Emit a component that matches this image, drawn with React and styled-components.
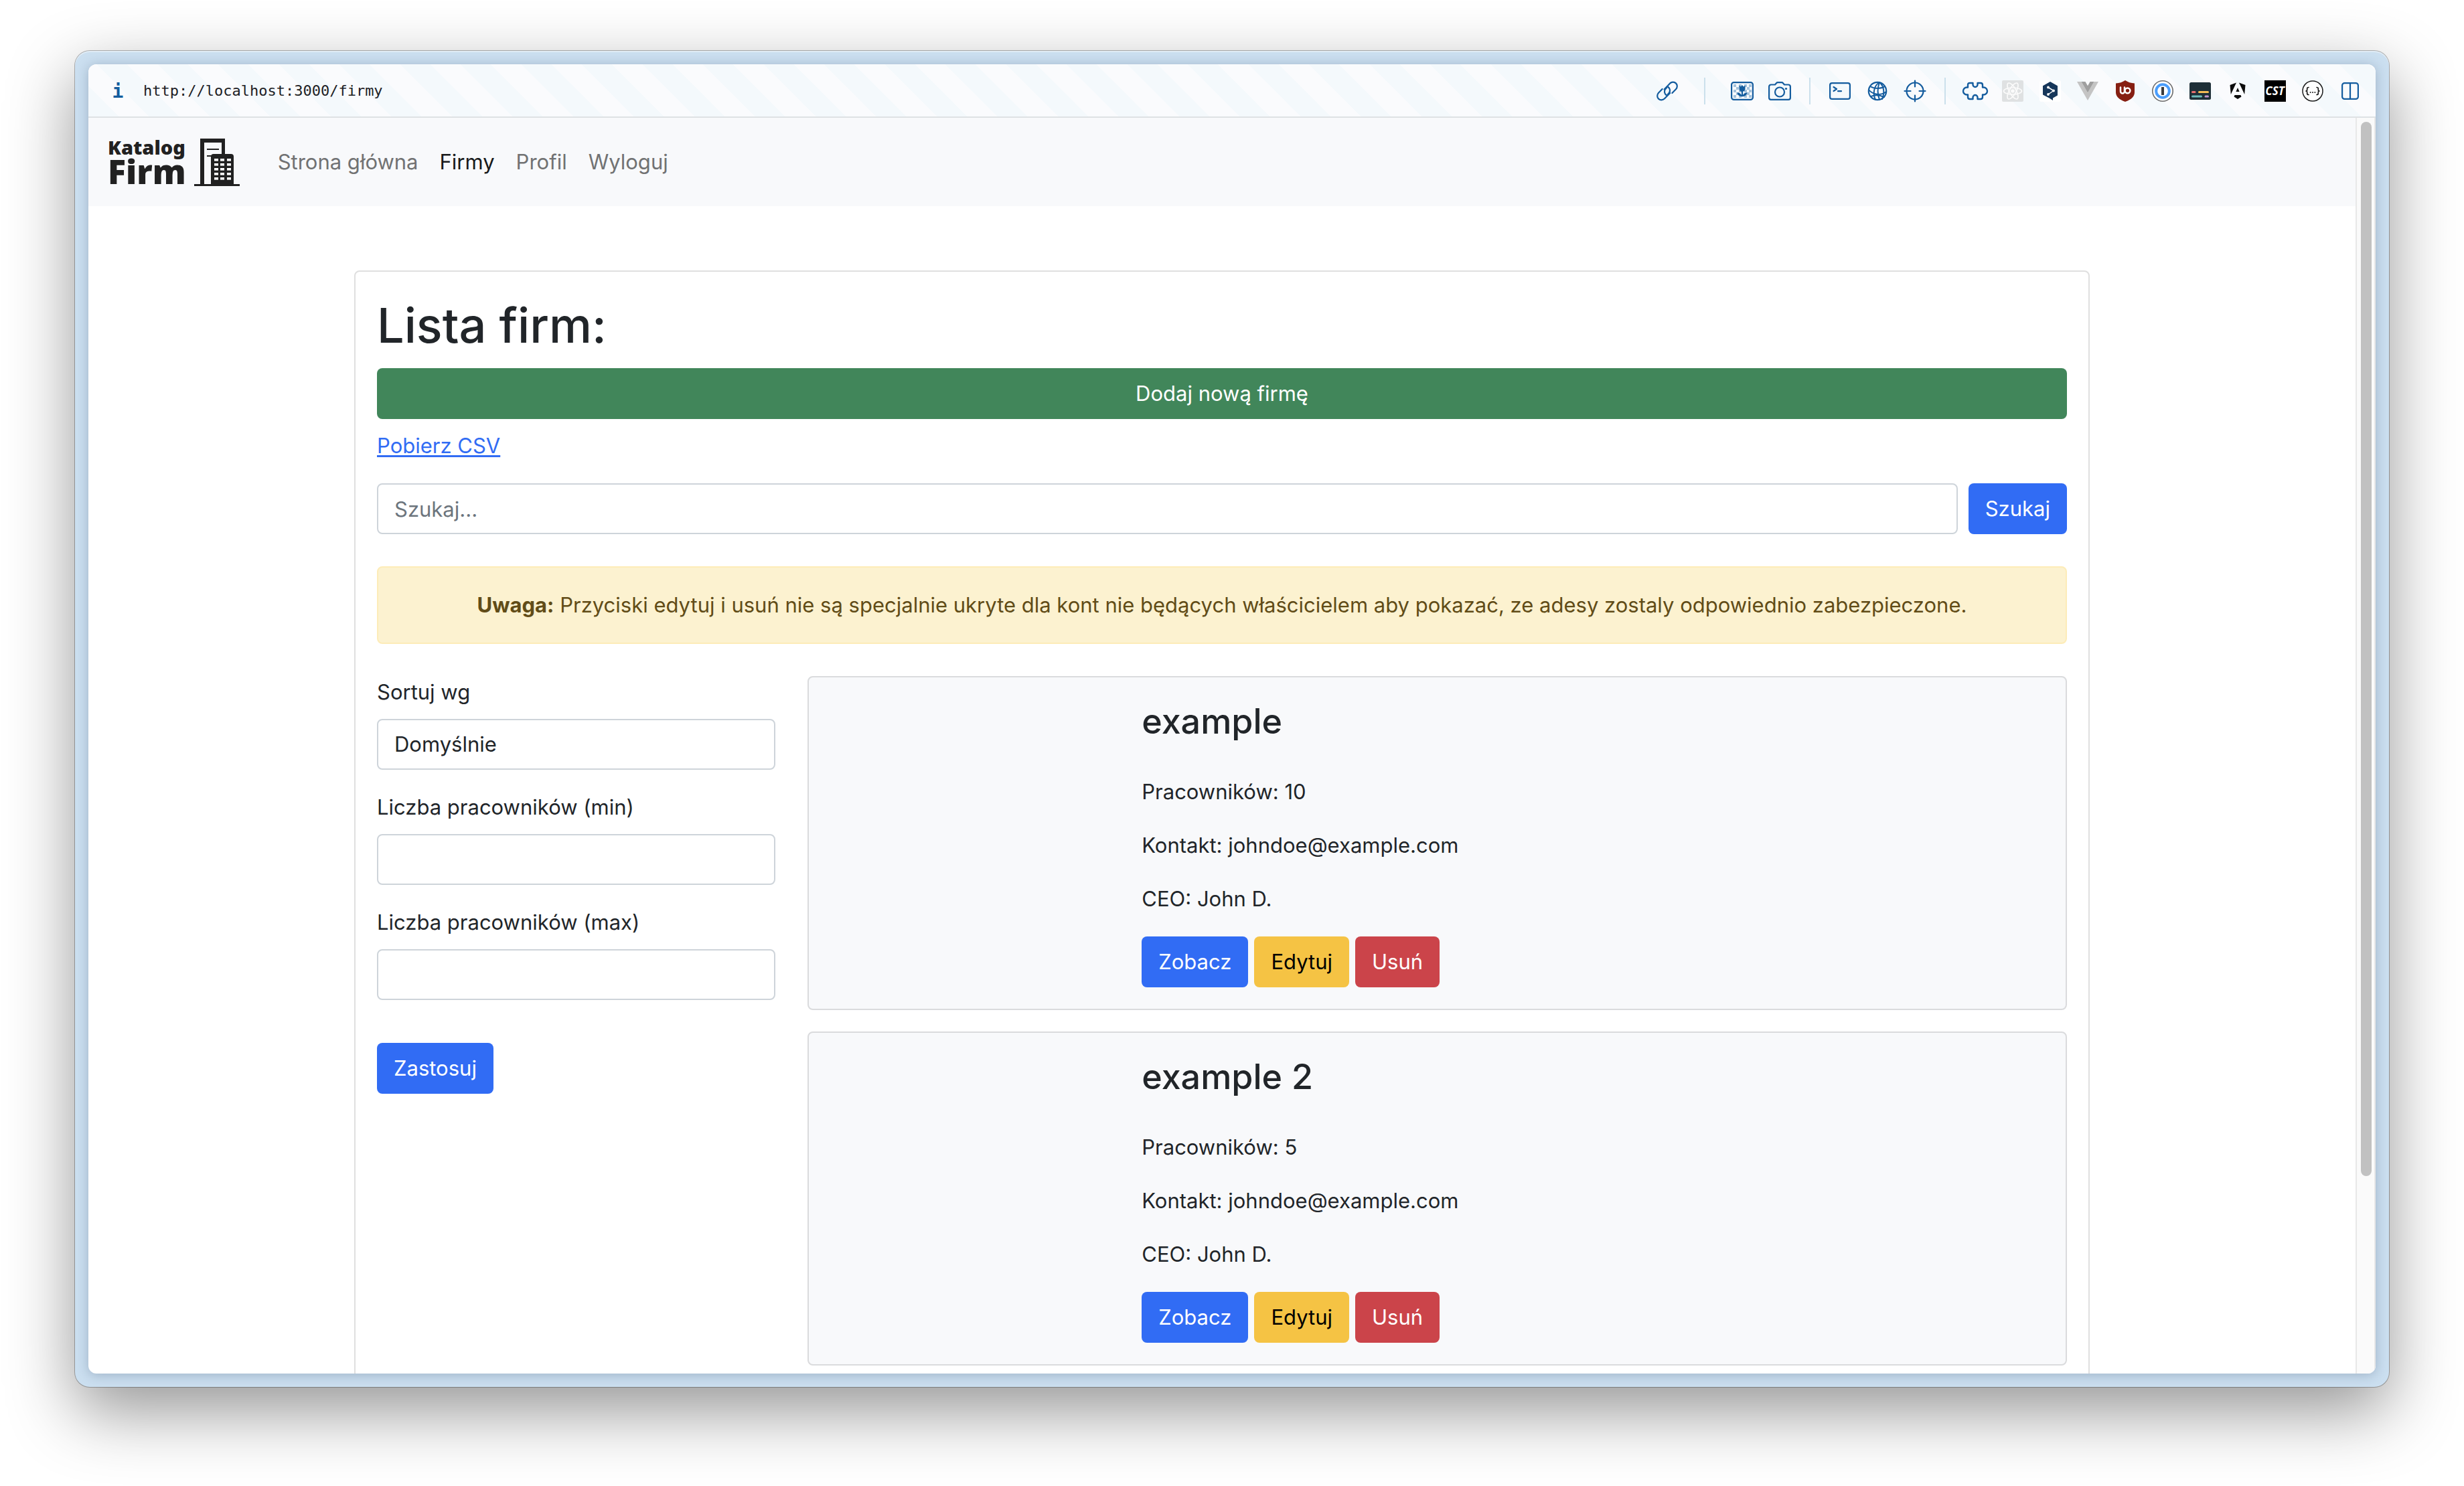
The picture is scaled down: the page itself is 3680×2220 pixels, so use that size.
import React from "react";
import styled, { createGlobalStyle } from "styled-components";

const GlobalStyle = createGlobalStyle`
  *, *::before, *::after { box-sizing: border-box; }
  body {
    margin: 0;
    background: #fff;
    color: #212529;
    font-family: Inter, "Liberation Sans", sans-serif;
    font-size: 31px;
    line-height: 48px;
  }
  h1, h2, p { margin: 0; }
`;

/* ---------- window ---------- */

const Desktop = styled.div`
  display: flex;
  height: 100vh;
  padding: 76px 112px 148px;
  overflow: hidden;
`;

const Frame = styled.div`
  flex: 1;
  min-width: 0;
  display: flex;
  padding: 20px;
  border-radius: 22px;
  background: #cbdff0;
  box-shadow:
    inset 0 2px 0 rgba(255, 255, 255, 0.4),
    0 0 0 1px rgba(0, 0, 0, 0.28),
    0 36px 100px rgba(0, 0, 0, 0.42);
`;

const Browser = styled.div`
  flex: 1;
  min-width: 0;
  display: flex;
  flex-direction: column;
  border-radius: 12px;
  overflow: hidden;
  background: #fff;
  box-shadow: 0 2px 18px rgba(20, 40, 70, 0.25);
`;

const Toolbar = styled.div`
  display: flex;
  align-items: center;
  height: 80px;
  padding: 2px 18px 0 24px;
  border-bottom: 2px solid #dee2e4;
  background: repeating-linear-gradient(45deg, #f4f9fc 0 32px, #fafbfd 32px 64px);
`;

const ToolButton = styled.button`
  display: flex;
  align-items: center;
  justify-content: center;
  width: 40px;
  height: 40px;
  padding: 0;
  border: 0;
  background: none;
  color: #145c9e;

  svg { display: block; overflow: visible; }
`;

const InfoMark = styled.span`
  font: bold 28px "DejaVu Sans Mono", monospace;
`;

const Address = styled.input`
  flex: 1;
  min-width: 0;
  height: 40px;
  margin: 0 18px;
  padding: 0;
  border: 0;
  outline: 0;
  background: none;
  color: #1d2125;
  font: 22px/40px "DejaVu Sans Mono", monospace;
`;

const ToolGroup = styled.div`
  display: flex;
  gap: 16px;
`;

const Separator = styled.span`
  width: 2px;
  height: 40px;
  margin: 0 ${(p) => (p.$wide ? 35 : 24)}px;
  background: #cbe0ec;
`;

const Viewport = styled.div`
  flex: 1;
  min-height: 0;
  display: flex;
`;

const Page = styled.div`
  flex: 1;
  min-width: 0;
  overflow: hidden;
`;

const ScrollTrack = styled.div`
  width: 30px;
  padding: 6px;
  border: solid #e8e8e8;
  border-width: 0 2px;
  background: #fafafa;
`;

const ScrollThumb = styled.div`
  width: 16px;
  height: 84.5%;
  border-radius: 8px;
  background: #c1c1c1;
`;

/* ---------- page ---------- */

const Navbar = styled.nav`
  display: flex;
  align-items: center;
  gap: 57px;
  height: 132px;
  padding: 0 29px;
  background: #f8f9fb;
`;

const Brand = styled.a`
  display: flex;
  align-items: center;
  gap: 12px;
  color: #212121;
  text-decoration: none;
  font-family: "Noto Sans", sans-serif;
  font-weight: 900;
`;

const BrandName = styled.span`
  display: flex;
  flex-direction: column;
`;

const BrandSmall = styled.span`
  font-size: 29px;
  line-height: 28px;
`;

const BrandLarge = styled.span`
  font-size: 50px;
  line-height: 44px;
`;

const NavLinks = styled.div`
  display: flex;
  gap: 32px;
`;

const NavLink = styled.a`
  color: ${(p) => (p.$active ? "#18191a" : "#717273")};
  text-decoration: none;
`;

const Panel = styled.main`
  max-width: 2592px;
  margin: 96px auto;
  padding: 32px;
  border: 2px solid #dfdfdf;
  border-radius: 8px;
  background: #fff;
`;

const Title = styled.h1`
  margin-bottom: 16px;
  font-size: 72px;
  font-weight: 500;
  line-height: 96px;
`;

const tones = {
  primary: ["#316cf4", "#fff"],
  success: ["#41865a", "#fff"],
  warning: ["#f5c344", "#000"],
  danger: ["#cb444a", "#fff"],
};

const Button = styled.button`
  display: ${(p) => (p.$block ? "block" : "inline-block")};
  width: ${(p) => (p.$block ? "100%" : "auto")};
  padding: 14px ${(p) => (p.$block ? 26 : 25)}px;
  border: 0;
  border-radius: 8px;
  background: ${(p) => tones[p.$tone][0]};
  color: ${(p) => tones[p.$tone][1]};
  font: inherit;
  line-height: 48px;
`;

const CsvRow = styled.p`
  margin: 16px 0 32px;
`;

const CsvLink = styled.a`
  color: #316cf4;
  text-decoration-thickness: 3px;
  text-underline-offset: 3px;
`;

const SearchForm = styled.form`
  display: flex;
  gap: 16px;
`;

const Field = styled.input`
  display: block;
  width: 100%;
  min-width: 0;
  height: 76px;
  margin: 0;
  padding: 12px 24px;
  border: 2px solid #ced4da;
  border-radius: 8px;
  background: #fff;
  color: #212529;
  font: inherit;
  appearance: none;

  &::placeholder { color: #6c757d; opacity: 1; }
`;

const Notice = styled.div`
  margin: 48px 0;
  padding: 32px;
  border: 2px solid #fdecb8;
  border-radius: 8px;
  background: #fcf2d0;
  color: #614c17;
  text-align: center;
`;

const Columns = styled.div`
  display: grid;
  grid-template-columns: repeat(12, 1fr);
  column-gap: 48px;
`;

const Filters = styled.form`
  grid-column: span 3;
  display: flex;
  flex-direction: column;
  align-items: flex-start;
  gap: 32px;
`;

const FilterRow = styled.div`
  width: 100%;
`;

const FilterLabel = styled.label`
  display: block;
  margin-bottom: 16px;
`;

const FilterActions = styled.div`
  margin-top: 32px;
`;

const Results = styled.div`
  grid-column: span 9;
  display: flex;
  flex-direction: column;
  gap: 32px;
`;

const CompanyCard = styled.article`
  padding: 32px;
  border: 2px solid #dadbdd;
  border-radius: 8px;
  background: #f8f9fb;
`;

const CompanyBody = styled.div`
  grid-column: 4 / -1;
`;

const CompanyName = styled.h2`
  margin-bottom: 48px;
  font-size: 52px;
  font-weight: 500;
  line-height: 67px;
`;

const Detail = styled.p`
  margin-bottom: 32px;
`;

const Actions = styled.div`
  display: flex;
  gap: 9px;
`;

/* ---------- drawings ---------- */

const BuildingLogo = () => (
  <svg width="68" height="72" viewBox="0 0 68 72" fill="#212121" aria-hidden="true">
    <path d="M9 1h37v24h-5V7H15v62H9z" />
    <path d="M19 16h18v2H19zM19 26h8v2h-8z" />
    <path d="M29 24h26a4 4 0 0 1 4 4v42H25V28a4 4 0 0 1 4-4z" />
    <path d="M0 69h68v3H0z" />
    {[31, 38, 45, 52, 59].map((y) =>
      [30, 39, 49].map((x) => <rect key={`${x}-${y}`} x={x} y={y} width="6" height="3.6" fill="#fff" />)
    )}
  </svg>
);

const Svg = ({ w = 32, h = 32, stroke, children }) => (
  <svg
    width={w}
    height={h}
    viewBox={`0 0 ${w} ${h}`}
    fill="none"
    stroke={stroke ? "currentColor" : "none"}
    strokeWidth="2.2"
    strokeLinecap="round"
    strokeLinejoin="round"
    aria-hidden="true"
  >
    {children}
  </svg>
);

const LinkIcon = () => (
  <Svg stroke>
    <path d="M11.6 13.4 L20.2 4.4 A6.2 6.2 0 0 1 29 13.2 L23.4 19" />
    <path d="M20.2 19 L11.8 27.6 A6.2 6.2 0 0 1 3 18.8 L8.6 13" />
    <path d="M14.6 22 a6.2 6.2 0 0 1 -1.4 -8.8 l2.4 -2.6" />
    <path d="M17.4 10 a6.2 6.2 0 0 1 1.4 8.8 l-2.4 2.6" />
  </Svg>
);

const PictureIcon = () => (
  <Svg w={34} h={28} stroke>
    <rect x="1.1" y="1.1" width="31.8" height="25.8" rx="3.5" />
    <g fill="#a6c3dc" stroke="none">
      {[4, 12, 20].map((y) =>
        [4, 12, 20, 27].map((x) => <rect key={`${x}-${y}`} x={x} y={y} width="4" height="4" />)
      )}
      {[8, 16].map((y) => [8, 24].map((x) => <rect key={`${x}-${y}`} x={x} y={y} width="4" height="4" />))}
    </g>
    <path
      d="M12.5 5.5l2.5 2 2-2.5 2 2.5 2.5-2v5a4.5 4.5 0 0 1-3.4 4.2V20c1-2.4 3.4-3.8 6.4-3.8-.4 3.6-3.2 6-7.5 6s-7.1-2.4-7.5-6c3 0 5.4 1.4 6.4 3.8v-5.3a4.5 4.5 0 0 1-3.4-4.2z"
      fill="currentColor"
      stroke="none"
    />
  </Svg>
);

const CameraIcon = () => (
  <Svg w={34} h={28} stroke>
    <path d="M4 4.5h6l2.2-2.5q.7-.9 1.8-.9h6q1.1 0 1.8.9L24 4.5h6a2.9 2.9 0 0 1 2.9 2.9V24a2.9 2.9 0 0 1-2.9 2.9H4A2.9 2.9 0 0 1 1.1 24V7.4A2.9 2.9 0 0 1 4 4.5z" />
    <circle cx="17" cy="15.5" r="7" />
    <circle cx="26.5" cy="10.5" r="1.6" fill="currentColor" stroke="none" />
  </Svg>
);

const TerminalIcon = () => (
  <Svg w={32} h={26} stroke>
    <rect x="1.1" y="1.1" width="29.8" height="23.8" rx="3" />
    <path d="M6.5 7l4.5 3-4.5 3M13 13.2h5" />
  </Svg>
);

const GlobeIcon = () => (
  <Svg w={30} h={30} stroke>
    <circle cx="15" cy="15" r="13.2" />
    <path d="M18 2C9 7 8 20 12 28M18 2c-3 8-3 18 0 26M18 2c7 6 8 16 4 25" strokeWidth="2" />
    <path d="M4 8c7 4 16 4 22 0M2 13c6 8 19 9 26 3M5 23c7-3 14-2 20 1" strokeWidth="2" />
  </Svg>
);

const TargetIcon = () => (
  <Svg w={34} h={34} stroke>
    <circle cx="17" cy="17" r="12.5" />
    <path d="M17 1.500v9M17 23.500v9M1.500 17h9M23.500 17h9" />
  </Svg>
);

const PuzzleIcon = () => (
  <svg width="38" height="28" viewBox="0 0 38 28" fill="none" stroke="#145c9e" strokeWidth="2.4" strokeLinejoin="round" aria-hidden="true">
    <path d="M11 2h4.500v2.500a3.500 3.500 0 0 0 7 0V2H27q3 0 3 3v3.500h1.500a5.500 5.500 0 0 1 0 11H30V23q0 3-3 3h-4.500v-2.500a3.500 3.500 0 0 0-7 0V26H11q-3 0-3-3v-3.500H6.500a5.500 5.500 0 0 1 0-11H8V5q0-3 3-3z" />
  </svg>
);

const ReactIcon = () => (
  <Svg>
    <rect width="32" height="32" rx="2" fill="#dfe1e2" />
    <g stroke="#fbfbfb" strokeWidth="1.7">
      {[0, 60, 120].map((r) => (
        <ellipse key={r} cx="16" cy="16" rx="13.5" ry="5" transform={`rotate(${r} 16 16)`} />
      ))}
    </g>
    <circle cx="16" cy="16" r="2.8" fill="#fbfbfb" />
  </Svg>
);

const DeeplIcon = () => (
  <Svg>
    <rect width="32" height="32" rx="3" fill="#fff" />
    <path d="M16 2l11 6.300V22.500l-7 4V30l-5-3.200L5 21.500V8.300z" fill="#17375a" />
    <path d="M13 10.500l8 5-8 5.500" stroke="#fff" strokeWidth="1.5" />
    <g fill="#fff">
      <circle cx="13" cy="10.5" r="1.9" />
      <circle cx="21" cy="15.5" r="1.9" />
      <circle cx="13" cy="21" r="1.9" />
    </g>
  </Svg>
);

const VueIcon = () => (
  <Svg>
    <path d="M0 2h6.500L16 18.500 25.500 2H32L16 30z" fill="#c4c4c4" />
    <path d="M6.500 2h6L16 8.200 19.500 2h6L16 18.500z" fill="#9f9f9f" />
  </Svg>
);

const ShieldIcon = () => (
  <Svg>
    <path d="M16 0q6 4 14 4.500V18q0 9-14 14Q2 27 2 18V4.500Q10 4 16 0z" fill="#861f12" />
    <path d="M9 10.500v6a3 3 0 0 0 6 0v-6" stroke="#fff" strokeWidth="2.5" />
    <circle cx="19.5" cy="15.3" r="3.9" stroke="#fff" strokeWidth="2.5" />
  </Svg>
);

const PasswordIcon = () => (
  <Svg>
    <circle cx="16" cy="16" r="15.2" fill="#fff" stroke="#6b6b6b" strokeWidth="1.6" />
    <circle cx="16" cy="16" r="9.8" fill="#fff" stroke="#4a9dfb" strokeWidth="4" />
    <rect x="14" y="10" width="4" height="12" fill="#3b3b3b" />
  </Svg>
);

const CaptionIcon = () => (
  <Svg>
    <rect y="3" width="32" height="26" rx="2.5" fill="#1e2f37" />
    <g strokeWidth="3" strokeLinecap="round">
      <path d="M4.500 17.600h3.500" stroke="#ea6f6f" />
      <path d="M14.500 17.600h13" stroke="#f6bd55" />
      <path d="M4.500 24h13" stroke="#6fbcbb" />
      <path d="M24 24h3.500" stroke="#c596cd" />
    </g>
  </Svg>
);

const AngularIcon = () => (
  <Svg>
    <g fill="#0c0c0c">
      <path d="M14 3.500L4.500 7l1.300 14zM18 3.500L27.500 7l-1.300 14z" />
      <path d="M16 11l2.600 6h-5.200zM11.500 22h9l1 2.500L16 28l-5.500-3.500z" />
    </g>
  </Svg>
);

const CstIcon = () => (
  <Svg>
    <rect width="32" height="32" fill="#000" />
    <text x="15.5" y="22" fill="#fff" textAnchor="middle" fontFamily="Open Sans, sans-serif" fontSize="17" fontWeight="700" fontStyle="italic">
      CST
    </text>
  </Svg>
);

const JsonIcon = () => (
  <Svg>
    <circle cx="16" cy="16" r="15" fill="#fff" stroke="#1c1c1c" strokeWidth="1.5" />
    <path
      d="M10 10.500q-2.300 0-2.300 2v1.500q0 2-1.700 2 1.700 0 1.700 2v1.500q0 2 2.300 2M22 10.500q2.300 0 2.300 2v1.500q0 2 1.700 2-1.700 0-1.700 2v1.500q0 2-2.300 2"
      stroke="#1c1c1c"
      strokeWidth="1.7"
    />
    <g fill="#1c1c1c">
      <circle cx="12.6" cy="18" r="1" />
      <circle cx="16" cy="18" r="1" />
      <circle cx="19.4" cy="18" r="1" />
    </g>
  </Svg>
);

const SplitIcon = () => (
  <Svg w={26} h={26} stroke>
    <rect x="1.1" y="1.1" width="23.8" height="23.8" rx="3.5" />
    <path d="M13 1.500v23" />
  </Svg>
);

const Tool = ({ label, icon: Icon }) => (
  <ToolButton type="button" aria-label={label}>
    <Icon />
  </ToolButton>
);

const extensions = [
  ["Rozszerzenia", PuzzleIcon],
  ["React", ReactIcon],
  ["Tłumacz", DeeplIcon],
  ["Vue", VueIcon],
  ["Blokada reklam", ShieldIcon],
  ["Hasła", PasswordIcon],
  ["Napisy", CaptionIcon],
  ["Angular", AngularIcon],
  ["CST", CstIcon],
  ["JSON", JsonIcon],
  ["Podziel widok", SplitIcon],
];

const companies = [
  { name: "example", employees: 10, contact: "johndoe@example.com", ceo: "John D." },
  { name: "example 2", employees: 5, contact: "johndoe@example.com", ceo: "John D." },
];

const Company = ({ name, employees, contact, ceo }) => (
  <CompanyCard>
    <Columns>
      <CompanyBody>
        <CompanyName>{name}</CompanyName>
        <Detail>Pracowników: {employees}</Detail>
        <Detail>Kontakt: {contact}</Detail>
        <Detail>CEO: {ceo}</Detail>
        <Actions>
          <Button type="button" $tone="primary">Zobacz</Button>
          <Button type="button" $tone="warning">Edytuj</Button>
          <Button type="button" $tone="danger">Usuń</Button>
        </Actions>
      </CompanyBody>
    </Columns>
  </CompanyCard>
);

export default function App() {
  return (
    <Desktop>
      <GlobalStyle />
      <Frame>
        <Browser>
          <Toolbar>
            <ToolButton type="button" aria-label="Informacje o stronie">
              <InfoMark>i</InfoMark>
            </ToolButton>
            <Address aria-label="Adres" defaultValue="http://localhost:3000/firmy" />
            <Tool label="Kopiuj link" icon={LinkIcon} />
            <Separator $wide />
            <ToolGroup>
              <Tool label="Zrzut elementu" icon={PictureIcon} />
              <Tool label="Zrzut ekranu" icon={CameraIcon} />
            </ToolGroup>
            <Separator />
            <ToolGroup>
              <Tool label="Konsola" icon={TerminalIcon} />
              <Tool label="Sieć" icon={GlobeIcon} />
              <Tool label="Inspektor" icon={TargetIcon} />
            </ToolGroup>
            <Separator />
            <ToolGroup>
              {extensions.map(([label, icon]) => (
                <Tool key={label} label={label} icon={icon} />
              ))}
            </ToolGroup>
          </Toolbar>
          <Viewport>
            <Page>
              <Navbar>
                <Brand href="#">
                  <BrandName>
                    <BrandSmall>Katalog</BrandSmall>
                    <BrandLarge>Firm</BrandLarge>
                  </BrandName>
                  <BuildingLogo />
                </Brand>
                <NavLinks>
                  <NavLink href="#">Strona główna</NavLink>
                  <NavLink href="#" $active>Firmy</NavLink>
                  <NavLink href="#">Profil</NavLink>
                  <NavLink href="#">Wyloguj</NavLink>
                </NavLinks>
              </Navbar>
              <Panel>
                <Title>Lista firm:</Title>
                <Button type="button" $tone="success" $block>Dodaj nową firmę</Button>
                <CsvRow>
                  <CsvLink href="#">Pobierz CSV</CsvLink>
                </CsvRow>
                <SearchForm>
                  <Field type="search" placeholder="Szukaj..." aria-label="Szukaj" />
                  <Button type="button" $tone="primary">Szukaj</Button>
                </SearchForm>
                <Notice role="alert">
                  <strong>Uwaga:</strong> Przyciski edytuj i usuń nie są specjalnie ukryte dla kont nie będących
                  właścicielem aby pokazać, ze adesy zostaly odpowiednio zabezpieczone.
                </Notice>
                <Columns>
                  <Filters>
                    <FilterRow>
                      <FilterLabel htmlFor="sort">Sortuj wg</FilterLabel>
                      <Field as="select" id="sort">
                        <option>Domyślnie</option>
                      </Field>
                    </FilterRow>
                    <FilterRow>
                      <FilterLabel htmlFor="min">Liczba pracowników (min)</FilterLabel>
                      <Field id="min" type="text" />
                    </FilterRow>
                    <FilterRow>
                      <FilterLabel htmlFor="max">Liczba pracowników (max)</FilterLabel>
                      <Field id="max" type="text" />
                    </FilterRow>
                    <FilterActions>
                      <Button type="button" $tone="primary">Zastosuj</Button>
                    </FilterActions>
                  </Filters>
                  <Results>
                    {companies.map((company) => (
                      <Company key={company.name} {...company} />
                    ))}
                  </Results>
                </Columns>
              </Panel>
            </Page>
            <ScrollTrack>
              <ScrollThumb />
            </ScrollTrack>
          </Viewport>
        </Browser>
      </Frame>
    </Desktop>
  );
}
